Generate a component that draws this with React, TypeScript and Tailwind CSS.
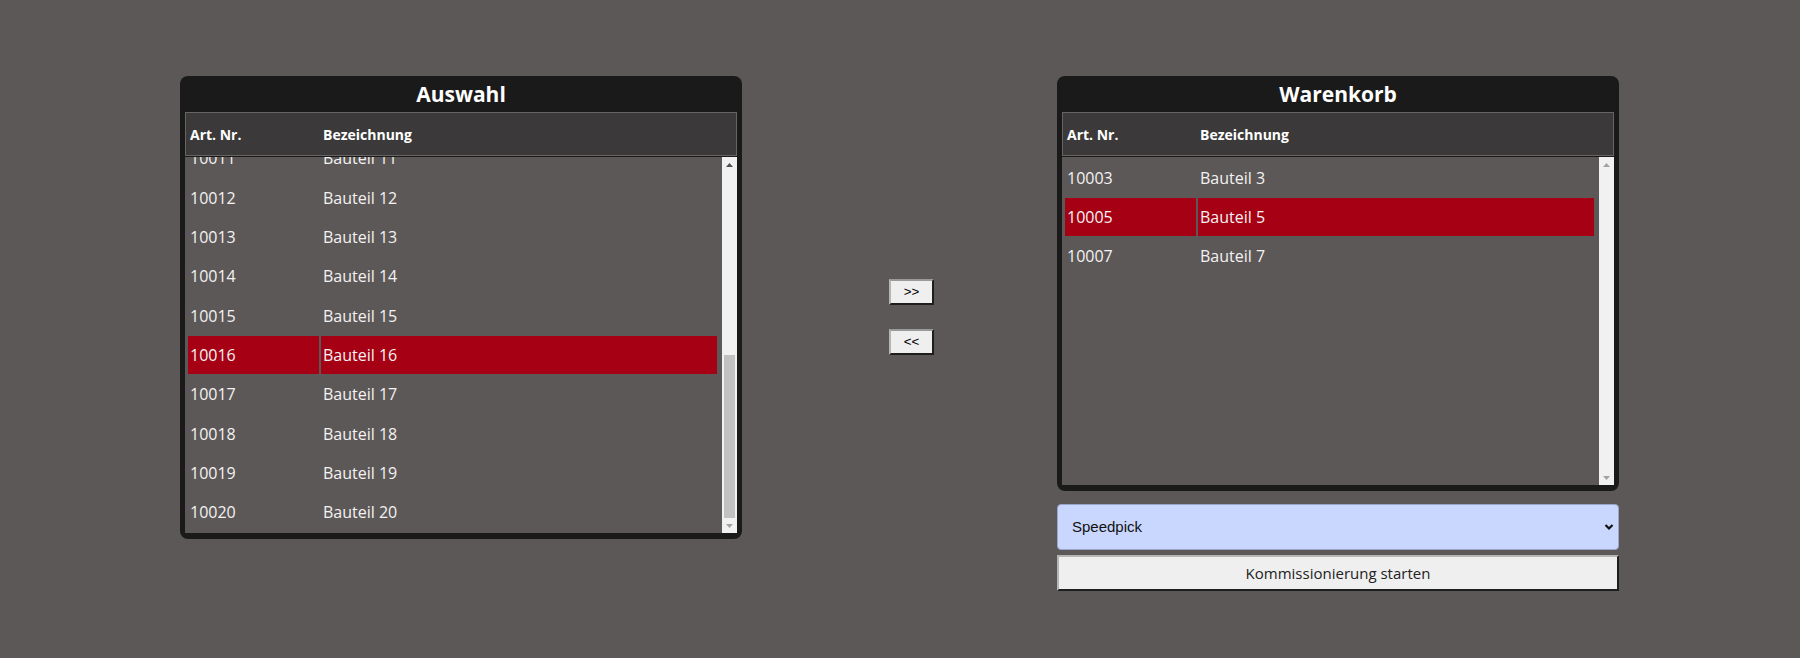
type Part = { nr: string; name: string };

// only the tail of the list is in view (the list is scrolled to the bottom)
const auswahl: Part[] = Array.from({ length: 10 }, (_, i) => ({
  nr: String(10011 + i),
  name: `Bauteil ${11 + i}`,
}));

const warenkorb: Part[] = [
  { nr: '10003', name: 'Bauteil 3' },
  { nr: '10005', name: 'Bauteil 5' },
  { nr: '10007', name: 'Bauteil 7' },
];

function Arrow({ up, color }: { up?: boolean; color: string }) {
  return (
    <div className="h-[15px] flex items-center justify-center">
      <svg width="7" height="4" viewBox="0 0 7 4">
        <path d={up ? 'M0 4 L3.5 0 L7 4 Z' : 'M0 0 L3.5 4 L7 0 Z'} fill={color} />
      </svg>
    </div>
  );
}

function Scrollbar({ thumb }: { thumb?: boolean }) {
  return (
    <div className="w-[15px] shrink-0 bg-[#f1f1f1] flex flex-col">
      <Arrow up color={thumb ? '#505050' : '#a3a3a3'} />
      <div className="flex-1 flex flex-col justify-end px-[2px]">
        {thumb && <div className="h-[163px] bg-[#c1c1c1]" />}
      </div>
      <Arrow color="#a3a3a3" />
    </div>
  );
}

function Panel({
  title,
  rows,
  selected,
  listHeight,
  thumb,
}: {
  title: string;
  rows: Part[];
  selected: string;
  listHeight: string;
  thumb?: boolean;
}) {
  return (
    <div className="w-[562px] bg-[#1b1a1a] rounded-[8px] px-[5px] pb-[6px]">
      <h2 className="h-[36px] flex items-center justify-center text-[21px] font-bold text-white leading-none">
        {title}
      </h2>

      <div className="h-[44px] border border-[#676464] bg-[#3b3939] flex items-center pl-[3px] text-[14px] font-bold text-white">
        <span className="w-[133px] pl-[1px]">Art. Nr.</span>
        <span className="pl-[1px]">Bezeichnung</span>
      </div>

      <div className={`${listHeight} mt-[1px] flex bg-[#5c5857]`}>
        <div
          className={`flex-1 overflow-hidden flex flex-col gap-[2px] pb-[2px] pl-[3px] pr-[5px] ${
            thumb ? 'justify-end' : 'pt-[2px]'
          }`}
        >
          {rows.map((r) => {
            const cell = r.nr === selected ? 'bg-[#a50014]' : '';
            return (
              <div key={r.nr} className="flex shrink-0 gap-[2px] h-[37.33px] text-[16px] text-[#f4f2f2]">
                <div className={`w-[131px] pl-[2px] flex items-center ${cell}`}>{r.nr}</div>
                <div className={`flex-1 pl-[2px] flex items-center ${cell}`}>{r.name}</div>
              </div>
            );
          })}
        </div>
        <Scrollbar thumb={thumb} />
      </div>
    </div>
  );
}

const btn =
  "w-[45px] h-[26px] bg-[#efefef] border-2 border-t-[#9a9a9a] border-l-[#b5b5b5] border-r-[#1e1e1e] border-b-[#1e1e1e] font-['Liberation_Sans',sans-serif] text-[13.33px] text-black";

export default function App() {
  return (
    <div className="h-[658px] w-full bg-[#5c5857] font-['Open_Sans',sans-serif] pt-[76px] pl-[180px] flex items-start">
      <Panel title="Auswahl" rows={auswahl} selected="10016" listHeight="h-[376px]" thumb />

      <div className="ml-[147px] mt-[203px] flex flex-col gap-[24px]">
        <button className={btn}>&gt;&gt;</button>
        <button className={btn}>&lt;&lt;</button>
      </div>

      <div className="ml-[123px] w-[562px] flex flex-col">
        <Panel title="Warenkorb" rows={warenkorb} selected="10005" listHeight="h-[328px]" />

        <div className="relative mt-[13px]">
          <select
            defaultValue="speedpick"
            className="appearance-none w-full h-[46px] rounded-[4px] border border-[#9aa6c8] bg-[#c9d6fe] pl-[14px] font-['Liberation_Sans',sans-serif] text-[15px] text-[#111]"
          >
            <option value="speedpick">Speedpick</option>
            <option value="normal">Normal</option>
          </select>
          <svg
            className="absolute right-[5px] top-[19px] pointer-events-none"
            width="10"
            height="8"
            viewBox="0 0 10 8"
          >
            <path d="M1.5 2 L5 5.5 L8.5 2" fill="none" stroke="#111" strokeWidth="2.2" />
          </svg>
        </div>

        <button className="mt-[5px] h-[36px] w-full bg-[#efefef] border-2 border-t-[#b5b5b5] border-l-[#b5b5b5] border-r-[#1e1e1e] border-b-[#1e1e1e] text-[15px] text-[#222]">
          Kommissionierung starten
        </button>
      </div>
    </div>
  );
}
